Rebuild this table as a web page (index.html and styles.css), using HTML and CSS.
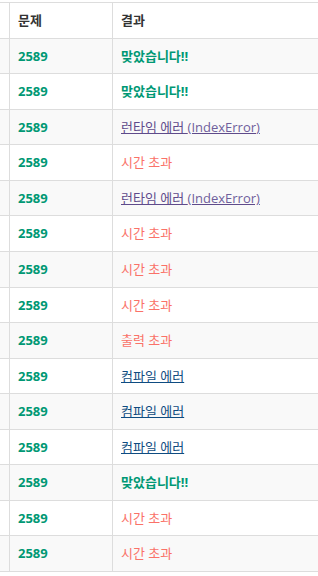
FILE: index.html
```html
<!DOCTYPE html>
<html lang="ko">
<head>
<meta charset="utf-8">
<link rel="stylesheet" href="styles.css">
</head>
<body>
<div class="wrap">
<table class="status">
  <colgroup><col class="c-id"><col class="c-prob"><col class="c-res"></colgroup>
  <thead>
    <tr><th></th><th>문제</th><th>결과</th></tr>
  </thead>
  <tbody>
    <tr><td></td><td><a class="prob">2589</a></td><td><span class="ac">맞았습니다!!</span></td></tr>
    <tr><td></td><td><a class="prob">2589</a></td><td><span class="ac">맞았습니다!!</span></td></tr>
    <tr><td></td><td><a class="prob">2589</a></td><td><a class="rte">런타임 에러 <span class="sub">(IndexError)</span></a></td></tr>
    <tr><td></td><td><a class="prob">2589</a></td><td><span class="tle">시간 초과</span></td></tr>
    <tr><td></td><td><a class="prob">2589</a></td><td><a class="rte">런타임 에러 <span class="sub">(IndexError)</span></a></td></tr>
    <tr><td></td><td><a class="prob">2589</a></td><td><span class="tle">시간 초과</span></td></tr>
    <tr><td></td><td><a class="prob">2589</a></td><td><span class="tle">시간 초과</span></td></tr>
    <tr><td></td><td><a class="prob">2589</a></td><td><span class="tle">시간 초과</span></td></tr>
    <tr><td></td><td><a class="prob">2589</a></td><td><span class="tle">출력 초과</span></td></tr>
    <tr><td></td><td><a class="prob">2589</a></td><td><a class="ce">컴파일 에러</a></td></tr>
    <tr><td></td><td><a class="prob">2589</a></td><td><a class="ce">컴파일 에러</a></td></tr>
    <tr><td></td><td><a class="prob">2589</a></td><td><a class="ce">컴파일 에러</a></td></tr>
    <tr><td></td><td><a class="prob">2589</a></td><td><span class="ac">맞았습니다!!</span></td></tr>
    <tr><td></td><td><a class="prob">2589</a></td><td><span class="tle">시간 초과</span></td></tr>
    <tr><td></td><td><a class="prob">2589</a></td><td><span class="tle">시간 초과</span></td></tr>
  </tbody>
</table>
</div>
</body>
</html>
```
FILE: styles.css
```css
html, body {
  margin: 0;
  padding: 0;
  background: #fff;
  overflow: hidden;
}
body {
  font-family: "Open Sans", "Noto Sans CJK KR", sans-serif;
  font-size: 13px;
  line-height: 1.42857;
  color: #333;
}
.wrap {
  padding-top: 2px;
}
.status {
  border-collapse: separate;
  border-spacing: 0;
  table-layout: fixed;
  width: 100%;
  border-top: 1px solid #ddd;
}
.c-id { width: 10px; }
.c-prob { width: 103px; }
.status th,
.status td {
  padding: 8px 8px;
  border-right: 1px solid #ddd;
  border-bottom: 1px solid #ddd;
  text-align: left;
  white-space: nowrap;
  vertical-align: top;
}
.status th:last-child,
.status td:last-child {
  border-right: 0;
}
.status th:first-child,
.status td:first-child {
  padding: 0;
}
.status th {
  font-weight: bold;
  color: #333;
}
.status tbody tr:nth-child(odd) {
  background: #f9f9f9;
}
.prob {
  color: #009874;
  font-weight: bold;
  text-decoration: none;
}
.ac {
  color: #009874;
  font-weight: bold;
}
.tle {
  color: #fa7268;
}
.rte {
  color: #5f4b8b;
  text-decoration: underline;
}
.rte .sub {
  color: #6f5f9c;
}
.ce {
  color: #0f4c81;
  text-decoration: underline;
}
```
